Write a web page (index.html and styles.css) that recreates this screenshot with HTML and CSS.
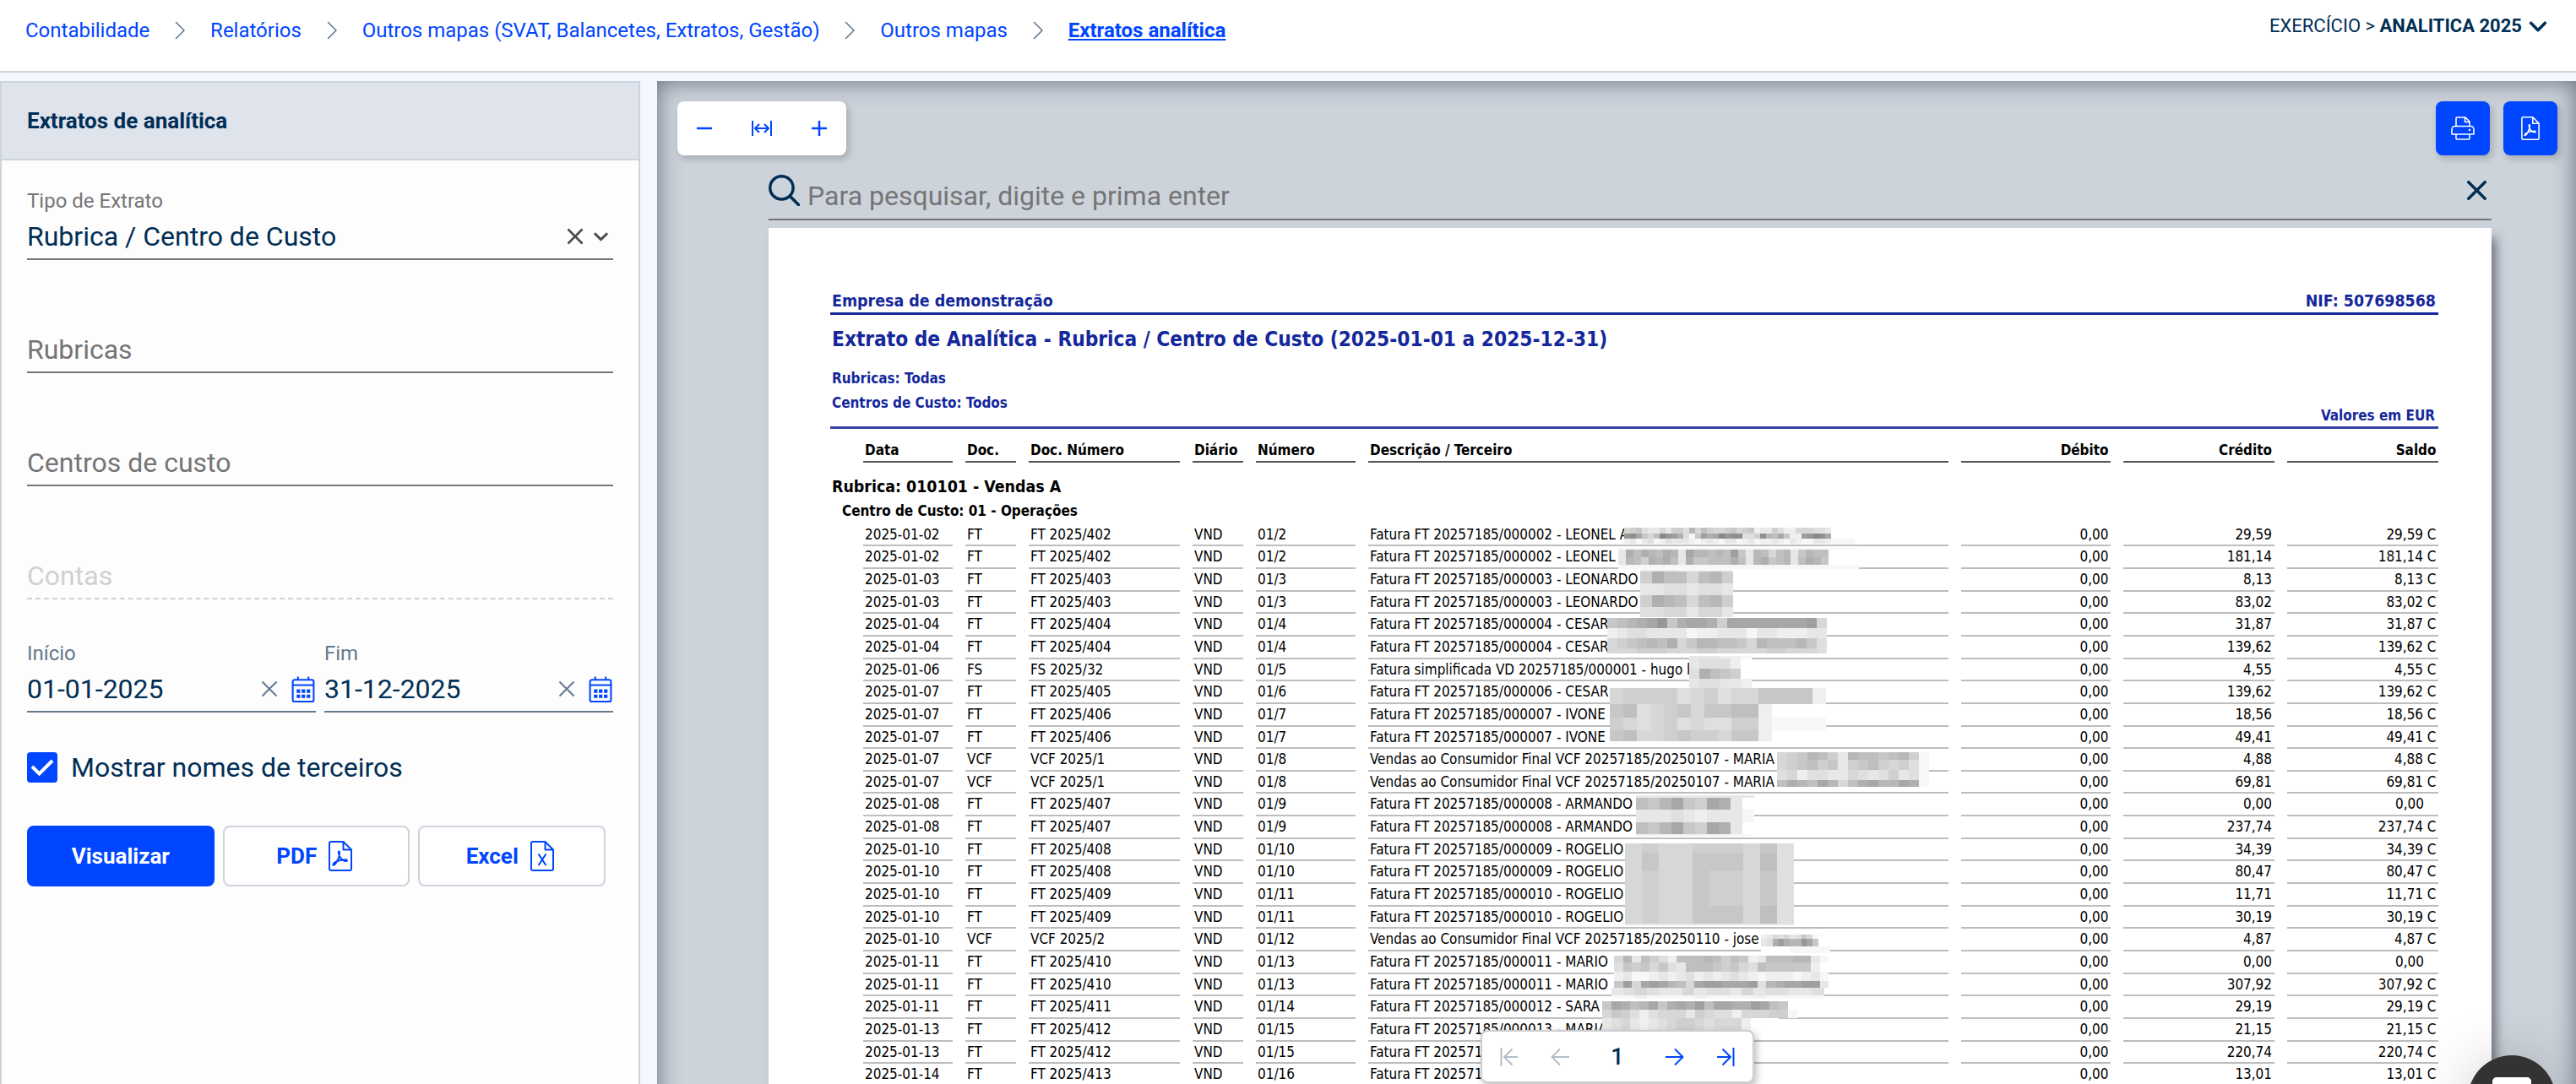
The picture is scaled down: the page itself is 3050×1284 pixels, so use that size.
FILE: index.html
```html
<!DOCTYPE html>
<html lang="pt">

<head>
    <meta charset="UTF-8">
    <meta name="viewport" content="width=device-width, initial-scale=1.0">
    <title>Extratos analítica</title>
    <link rel="stylesheet" href="styles.css">
</head>

<body>
    <svg class="sprite">
        <symbol id="sep" viewBox="0 0 12 22"><path d="M1 1l10 10L1 21" /></symbol>
        <symbol id="cross" viewBox="0 0 20 20"><path d="M1.500 1.500l17 17M18.500 1.500l-17 17" /></symbol>
        <symbol id="down" viewBox="0 0 20 12"><path d="M2 2l8 8 8-8" /></symbol>
        <symbol id="calendar" viewBox="0 0 26 30">
            <path d="M7 .5v4M19 .5v4M3 4.200h20a2 2 0 0 1 2 2V27a2 2 0 0 1-2 2H3a2 2 0 0 1-2-2V6.200a2 2 0 0 1 2-2zM1 10.200h24" />
            <path class="fill" d="M5.500 15h4v4h-4zM11.200 15h4v4h-4zM17 15h4v4h-4zM5.500 21h4v4h-4zM11.200 21h4v4h-4zM17 21h4v4h-4z" />
        </symbol>
        <symbol id="pdf" viewBox="0 0 28 36">
            <path d="M3 1h14.500L27 10.500V33a2 2 0 0 1-2 2H3a2 2 0 0 1-2-2V3a2 2 0 0 1 2-2zM17.500 1v9.500H27" />
            <path d="M12.500 12.500c-1.500 0-.5 3.500 1 6.500 1.500 2.500 4 5 7 5 2 0 2-1.700 0-1.800-4-.2-9 1-12.500 3-2.500 1.500-3.500 3.800-2 3.600 1.600-.3 4-4 6-9 1-3 1.500-7.300.5-7.300z" />
        </symbol>
        <symbol id="excel" viewBox="0 0 28 36">
            <path d="M3 1h14.500L27 10.500V33a2 2 0 0 1-2 2H3a2 2 0 0 1-2-2V3a2 2 0 0 1 2-2zM17.500 1v9.500H27" />
            <path d="M9.500 15.500l9 13.500M18.500 15.500l-9 13.500" />
        </symbol>
        <symbol id="print" viewBox="0 0 28 28">
            <path d="M6 11.500V2a1 1 0 0 1 1-1h10l5 5v5.500M16.500 1v5.500H22M6 21H1v-6a3.500 3.500 0 0 1 3.500-3.500h19A3.500 3.500 0 0 1 27 15v6h-5M6 21h16M6 21v5a1 1 0 0 0 1 1h14a1 1 0 0 0 1-1v-5" />
            <circle class="fill" cx="22" cy="16" r="1.200" />
        </symbol>
    </svg>

    <div class="app">
        <header class="top">
            <nav class="breadcrumb">
                <a>Contabilidade</a>
                <svg class="sep"><use href="#sep" /></svg>
                <a>Relatórios</a>
                <svg class="sep"><use href="#sep" /></svg>
                <a>Outros mapas (SVAT, Balancetes, Extratos, Gestão)</a>
                <svg class="sep"><use href="#sep" /></svg>
                <a>Outros mapas</a>
                <svg class="sep"><use href="#sep" /></svg>
                <a class="current">Extratos analítica</a>
            </nav>
            <div class="exercise">
                <span>EXERCÍCIO &gt; <b>ANALITICA 2025</b></span>
                <svg class="exercise-arrow"><use href="#down" /></svg>
            </div>
        </header>

        <main class="content">
            <section class="panel">
                <h1 class="panel-title">Extratos de analítica</h1>
                <form class="form">
                    <div class="field first">
                        <label class="label">Tipo de Extrato</label>
                        <div class="value">Rubrica / Centro de Custo
                            <span class="actions tight">
                                <svg class="clear"><use href="#cross" /></svg>
                                <svg class="arrow"><use href="#down" /></svg>
                            </span>
                        </div>
                    </div>
                    <div class="field"><div class="value placeholder">Rubricas</div></div>
                    <div class="field"><div class="value placeholder">Centros de custo</div></div>
                    <div class="field disabled"><div class="value">Contas</div></div>
                    <div class="dates">
                        <div class="field date">
                            <label class="label">Início</label>
                            <div class="value">01-01-2025
                                <span class="actions">
                                    <svg class="clear"><use href="#cross" /></svg>
                                    <svg class="calendar"><use href="#calendar" /></svg>
                                </span>
                            </div>
                        </div>
                        <div class="field date">
                            <label class="label">Fim</label>
                            <div class="value">31-12-2025
                                <span class="actions">
                                    <svg class="clear"><use href="#cross" /></svg>
                                    <svg class="calendar"><use href="#calendar" /></svg>
                                </span>
                            </div>
                        </div>
                    </div>
                    <div class="check">
                        <span class="box"><svg class="tick" viewBox="0 0 28 22"><path d="M2 10l8.500 8.500L26 3" /></svg></span>
                        Mostrar nomes de terceiros
                    </div>
                    <div class="buttons">
                        <a class="btn primary">Visualizar</a>
                        <a class="btn with-icon">PDF <svg class="file"><use href="#pdf" /></svg></a>
                        <a class="btn with-icon">Excel <svg class="file"><use href="#excel" /></svg></a>
                    </div>
                </form>
            </section>

            <section class="viewer">
                <div class="toolbar">
                    <div class="zoom">
                        <svg class="zoom-icon" viewBox="0 0 24 24"><path class="thick" d="M3 12h18" /></svg>
                        <svg class="zoom-icon" viewBox="0 0 24 24"><path d="M1 3v18M23 3v18M4.500 12h15M9 7l-5 5 5 5M15 7l5 5-5 5" /></svg>
                        <svg class="zoom-icon" viewBox="0 0 24 24"><path class="thick" d="M3 12h18M12 3v18" /></svg>
                    </div>
                    <div class="tools">
                        <a class="tool"><svg class="print"><use href="#print" /></svg></a>
                        <a class="tool"><svg class="pdf"><use href="#pdf" /></svg></a>
                    </div>
                </div>
                <div class="search">
                    <svg class="search-icon" viewBox="0 0 36 36"><circle cx="15" cy="15" r="13.300" /><path d="M24.500 24.500l10 10" /></svg>
                    <span class="search-text">Para pesquisar, digite e prima enter</span>
                    <svg class="search-close"><use href="#cross" /></svg>
                </div>

                <article class="paper">
                    <div class="company"><span>Empresa de demonstração</span><span>NIF: 507698568</span></div>
                    <h2 class="title">Extrato de Analítica - Rubrica / Centro de Custo (2025-01-01 a 2025-12-31)</h2>
                    <p class="filter">Rubricas: Todas</p>
                    <div class="filters"><span>Centros de Custo: Todos</span><span class="currency">Valores em EUR</span></div>
                    <div class="row head">
                        <span>Data</span><span>Doc.</span><span>Doc. Número</span><span>Diário</span><span>Número</span><span>Descrição / Terceiro</span><span class="num">Débito</span><span class="num">Crédito</span><span class="num">Saldo</span>
                    </div>
                    <h3 class="rubric">Rubrica: 010101 - Vendas A</h3>
                    <h4 class="center">Centro de Custo: 01 - Operações</h4>
                    <div id="rows"></div>
                </article>
                <div id="masks"></div>
            </section>
        </main>

        <div class="pager">
            <svg class="page-icon off" viewBox="0 0 22 22"><path d="M1.500 0v22M21 11H5M14.500 1.500L5 11l9.500 9.500" /></svg>
            <svg class="page-icon off" viewBox="0 0 22 22"><path d="M22 11H1.500M11 1.500L1.500 11l9.500 9.500" /></svg>
            <span class="page">1</span>
            <svg class="page-icon" viewBox="0 0 22 22"><path d="M0 11h20.500M11 1.500l9.500 9.500-9.500 9.500" /></svg>
            <svg class="page-icon" viewBox="0 0 22 22"><path d="M20.500 0v22M1 11h16M7.500 1.500L17 11l-9.500 9.500" /></svg>
        </div>

        <div class="chat"><svg class="bubble" viewBox="0 0 46 44"><path d="M5 0h36a5 5 0 0 1 5 5v39L34 34H5a5 5 0 0 1-5-5V5a5 5 0 0 1 5-5z" /></svg></div>
    </div>

    <script src="script.js"></script>
</body>

</html>
```
FILE: styles.css
```css
* {
    box-sizing: border-box;
}

body {
    margin: 0;
    background: #f3f7ff;
    color: #002e55;
    font-family: Roboto, sans-serif;
}

.app {
    position: relative;
    height: 1284px;
    overflow: hidden;
}

svg {
    flex: none;
    fill: none;
    stroke: currentColor;
    stroke-width: 2;
    stroke-linejoin: round;
}

.sprite {
    display: none;
}

.fill {
    fill: currentColor;
    stroke: none;
}

/* top bar */
.top {
    display: flex;
    justify-content: space-between;
    height: 86px;
    padding: 0 33px 0 30px;
    background: #fff;
    border-bottom: 2px solid #cdd3dc;
}

.breadcrumb {
    display: flex;
    align-items: center;
    gap: 29.900px;
    height: 72px;
    font-size: 24px;
    line-height: 28px;
    color: #0045ff;
}

.sep {
    width: 12px;
    height: 22px;
    color: #64788f;
    stroke-width: 1.6;
}

.current {
    font-weight: bold;
    text-decoration: underline;
}

.exercise {
    display: flex;
    align-items: center;
    gap: 7px;
    height: 61px;
    font-size: 22px;
}

.exercise-arrow {
    width: 24px;
    height: 14px;
    stroke-width: 3;
}

.content {
    display: flex;
    gap: 20px;
    height: 1260px;
    padding-top: 10px;
}

/* filters panel */
.panel {
    width: 758px;
    background: #fdfdfd;
    border: 2px solid #cdd3dc;
    border-bottom: 0;
}

.panel-title {
    margin: 0;
    padding-left: 30px;
    height: 92px;
    border-bottom: 2px solid #cdd3dc;
    background: #dfe3ec;
    font-size: 26px;
    line-height: 90px;
}

.form {
    padding: 0 30px;
}

.field {
    display: flex;
    flex-direction: column;
    justify-content: flex-end;
    height: 134px;
    border-bottom: 2px solid #757575;
}

.field.first {
    height: 118px;
}

.label {
    margin-bottom: 9px;
    font-size: 24px;
    line-height: 28px;
    color: #757575;
}

.value {
    display: flex;
    justify-content: space-between;
    align-items: center;
    padding-bottom: 7px;
    font-size: 32px;
    line-height: 38px;
}

.placeholder {
    color: #757575;
}

.disabled {
    border-bottom: 2px dashed #d0d0d0;
    color: #d0d0d0;
}

.actions {
    display: flex;
    align-items: center;
    gap: 16px;
    margin-right: 1px;
    color: #64788f;
}

.actions.tight {
    gap: 11px;
    margin-right: 5px;
    color: #4c4c4c;
}

.clear {
    width: 20px;
    height: 20px;
}

.tight .clear {
    stroke-width: 2.6;
}

.arrow {
    width: 19px;
    height: 12px;
    stroke-width: 3.2;
}

.calendar {
    width: 28px;
    height: 31px;
    color: #0045ff;
}

.dates {
    display: flex;
    gap: 10px;
}

.date {
    flex: 1;
    border-color: #64788f;
}

.date .label {
    color: #64788f;
}

.check {
    display: flex;
    align-items: center;
    gap: 16px;
    margin: 46px 0 50px;
    font-size: 32px;
    line-height: 38px;
}

.box {
    display: flex;
    align-items: center;
    justify-content: center;
    width: 36px;
    height: 36px;
    border-radius: 4px;
    background: #0045ff;
    color: #fff;
}

.tick {
    width: 28px;
    height: 22px;
    stroke-width: 4;
    stroke-linejoin: miter;
}

.buttons {
    display: flex;
    gap: 10px;
}

.btn {
    display: flex;
    align-items: center;
    justify-content: center;
    gap: 14px;
    width: 221.500px;
    height: 72px;
    border: 2px solid #cdd3dc;
    border-radius: 8px;
    background: #fff;
    color: #0045ff;
    font-size: 26px;
    font-weight: bold;
}

.btn.with-icon {
    padding-right: 4px;
}

.btn.primary {
    border-color: #0045ff;
    background: #0045ff;
    color: #fff;
}

.file {
    width: 28px;
    height: 36px;
}

/* report viewer */
.viewer {
    position: relative;
    flex: 1;
    padding-top: 24px;
    background: #cdd3db;
    box-shadow: inset 0 0 28px rgba(50, 55, 70, 0.65);
}

.toolbar {
    display: flex;
    justify-content: space-between;
    height: 64px;
    padding: 0 22px 0 24px;
}

.zoom {
    display: flex;
    align-items: center;
    justify-content: space-between;
    width: 200px;
    padding: 0 20px;
    border-radius: 8px;
    background: #fff;
    color: #0045ff;
    box-shadow: 3px 4px 8px rgba(0, 0, 0, 0.2);
}

.zoom-icon {
    width: 24px;
    height: 24px;
}

.thick {
    stroke-width: 2.5;
}

.tools {
    display: flex;
    gap: 16px;
}

.tool {
    display: flex;
    align-items: center;
    justify-content: center;
    width: 64px;
    border-radius: 8px;
    background: #0045ff;
    color: #fff;
    box-shadow: 3px 4px 8px rgba(0, 0, 0, 0.2);
}

.print {
    width: 28px;
    height: 28px;
    stroke-width: 1.6;
}

.pdf {
    width: 22px;
    height: 28px;
}

.search {
    display: flex;
    align-items: flex-start;
    height: 57px;
    margin: 20px 100px 9px 132px;
    border-bottom: 2px solid #757575;
    color: #002e55;
}

.search-icon {
    width: 37px;
    height: 37px;
    margin-top: 3px;
    stroke-width: 3.4;
    stroke-linecap: round;
}

.search-text {
    flex: 1;
    padding: 9px 0 0 9px;
    font-size: 32px;
    line-height: 38px;
    color: #757575;
}

.search-close {
    width: 23px;
    height: 23px;
    margin: 10px 6px 0 0;
    stroke-width: 3;
    stroke-linecap: round;
}

/* report page */
.paper {
    height: 1070px;
    margin: 0 100px 0 132px;
    padding: 75px 63px 0 73px;
    background: #fff;
    box-shadow: 7px 10px 12px -2px rgba(40, 45, 60, 0.6);
    color: #000;
    font-family: "DejaVu Sans Condensed", "DejaVu Sans", sans-serif;
    font-size: 16.950px;
}

.company {
    display: flex;
    justify-content: space-between;
    height: 28px;
    padding: 0 3px 0 2px;
    border-bottom: 3px solid #14279b;
    color: #14279b;
    font-size: 19.400px;
    font-weight: bold;
    line-height: 24px;
}

.title {
    margin: 14px 0 21px 2px;
    color: #14279b;
    font-size: 24.230px;
    line-height: 30px;
}

.filter {
    margin: 0 0 9px 2px;
    color: #14279b;
    font-weight: bold;
    line-height: 20px;
}

.filters {
    display: flex;
    justify-content: space-between;
    height: 41px;
    padding: 0 4px 0 2px;
    border-bottom: 3px solid #3443a8;
    color: #14279b;
    font-weight: bold;
    line-height: 20px;
}

.currency {
    padding-top: 15px;
}

.row {
    display: grid;
    grid-template-columns: 106px 60px 179px 60px 118px 687.500px 177px 178.500px 179.500px;
    column-gap: 15px;
    height: 26.667px;
    margin-left: 38.500px;
    line-height: 24.667px;
    white-space: pre;
}

.row span {
    padding-left: 2.500px;
    border-bottom: 2px solid #bdbdbd;
}

.row .num {
    padding-right: 2.500px;
    text-align: right;
}

.head {
    height: 25px;
    margin-top: 15px;
    font-weight: bold;
    line-height: 20px;
}

.head span {
    border-color: #555;
}

.rubric {
    margin: 17px 0 6px 2px;
    font-size: 19.400px;
    line-height: 24px;
}

.center {
    margin: 0 0 5.600px 14px;
    font-size: 16.950px;
    line-height: 20px;
}

/* pixelated blocks over the third party names */
.mask {
    position: absolute;
}

.mask-row {
    display: flex;
}

.pager {
    position: absolute;
    left: 1753px;
    top: 1220px;
    display: flex;
    align-items: center;
    justify-content: space-between;
    width: 324px;
    height: 63px;
    padding: 0 21px;
    border: 2px solid #cdcdd2;
    border-radius: 8px;
    background: #fff;
    color: #0045ff;
    box-shadow: 3px 4px 10px rgba(0, 0, 0, 0.25);
}

.page-icon {
    width: 22px;
    height: 22px;
}

.page-icon.off {
    color: #b3bcc9;
}

.page {
    width: 38px;
    color: #002e55;
    font-size: 27px;
    font-weight: 500;
    text-align: center;
}

.chat {
    position: absolute;
    left: 2922px;
    top: 1250px;
    display: flex;
    justify-content: center;
    width: 104px;
    height: 104px;
    padding-top: 26px;
    border-radius: 50%;
    background: #333;
    box-shadow: 0 4px 70px rgba(0, 0, 0, 0.2);
}

.bubble {
    width: 46px;
    height: 44px;
    fill: #fff;
    stroke: none;
}
```
FILE: script.js
```js
// data, doc, número doc, número, descrição, crédito, saldo
var rows = [
    ['2025-01-02', 'FT', 'FT 2025/402', '01/2', 'Fatura FT 20257185/000002 - LEONEL A', '29,59', '29,59 C'],
    ['2025-01-02', 'FT', 'FT 2025/402', '01/2', 'Fatura FT 20257185/000002 - LEONEL', '181,14', '181,14 C'],
    ['2025-01-03', 'FT', 'FT 2025/403', '01/3', 'Fatura FT 20257185/000003 - LEONARDO', '8,13', '8,13 C'],
    ['2025-01-03', 'FT', 'FT 2025/403', '01/3', 'Fatura FT 20257185/000003 - LEONARDO', '83,02', '83,02 C'],
    ['2025-01-04', 'FT', 'FT 2025/404', '01/4', 'Fatura FT 20257185/000004 - CESAR', '31,87', '31,87 C'],
    ['2025-01-04', 'FT', 'FT 2025/404', '01/4', 'Fatura FT 20257185/000004 - CESAR', '139,62', '139,62 C'],
    ['2025-01-06', 'FS', 'FS 2025/32', '01/5', 'Fatura simplificada VD 20257185/000001 - hugo l', '4,55', '4,55 C'],
    ['2025-01-07', 'FT', 'FT 2025/405', '01/6', 'Fatura FT 20257185/000006 - CESAR', '139,62', '139,62 C'],
    ['2025-01-07', 'FT', 'FT 2025/406', '01/7', 'Fatura FT 20257185/000007 - IVONE', '18,56', '18,56 C'],
    ['2025-01-07', 'FT', 'FT 2025/406', '01/7', 'Fatura FT 20257185/000007 - IVONE', '49,41', '49,41 C'],
    ['2025-01-07', 'VCF', 'VCF 2025/1', '01/8', 'Vendas ao Consumidor Final VCF 20257185/20250107 - MARIA', '4,88', '4,88 C'],
    ['2025-01-07', 'VCF', 'VCF 2025/1', '01/8', 'Vendas ao Consumidor Final VCF 20257185/20250107 - MARIA', '69,81', '69,81 C'],
    ['2025-01-08', 'FT', 'FT 2025/407', '01/9', 'Fatura FT 20257185/000008 - ARMANDO', '0,00', '0,00   '],
    ['2025-01-08', 'FT', 'FT 2025/407', '01/9', 'Fatura FT 20257185/000008 - ARMANDO', '237,74', '237,74 C'],
    ['2025-01-10', 'FT', 'FT 2025/408', '01/10', 'Fatura FT 20257185/000009 - ROGELIO', '34,39', '34,39 C'],
    ['2025-01-10', 'FT', 'FT 2025/408', '01/10', 'Fatura FT 20257185/000009 - ROGELIO', '80,47', '80,47 C'],
    ['2025-01-10', 'FT', 'FT 2025/409', '01/11', 'Fatura FT 20257185/000010 - ROGELIO', '11,71', '11,71 C'],
    ['2025-01-10', 'FT', 'FT 2025/409', '01/11', 'Fatura FT 20257185/000010 - ROGELIO', '30,19', '30,19 C'],
    ['2025-01-10', 'VCF', 'VCF 2025/2', '01/12', 'Vendas ao Consumidor Final VCF 20257185/20250110 - jose', '4,87', '4,87 C'],
    ['2025-01-11', 'FT', 'FT 2025/410', '01/13', 'Fatura FT 20257185/000011 - MARIO', '0,00', '0,00   '],
    ['2025-01-11', 'FT', 'FT 2025/410', '01/13', 'Fatura FT 20257185/000011 - MARIO', '307,92', '307,92 C'],
    ['2025-01-11', 'FT', 'FT 2025/411', '01/14', 'Fatura FT 20257185/000012 - SARA', '29,19', '29,19 C'],
    ['2025-01-13', 'FT', 'FT 2025/412', '01/15', 'Fatura FT 20257185/000013 - MARIA', '21,15', '21,15 C'],
    ['2025-01-13', 'FT', 'FT 2025/412', '01/15', 'Fatura FT 20257185/000013 - MARIA', '220,74', '220,74 C'],
    ['2025-01-14', 'FT', 'FT 2025/413', '01/16', 'Fatura FT 20257185/000014', '13,01', '13,01 C']
]

document.getElementById('rows').innerHTML = rows.map(function (r) {
    return '<div class="row"><span>' + [r[0], r[1], r[2], 'VND', r[3], r[4]].join('</span><span>') +
        '</span><span class="num">' + ['0,00', r[5], r[6]].join('</span><span class="num">') + '</span></div>'
}).join('')

// x, y, cell width, then [height, cells]; each cell is a hex digit, 0 = white, f = darkest
var masks = [
    [1145, 529, 7, [6.5, '567433536649586556756723364225554430000'], [6.5, 'deb758fdca417cabfdee446e98b722cdfeb0000'], [5.5, '231341243332123213312312232132113321111']],
    [1138, 553, 8.9, [2, '11111111111111111111111111111111'], [9, '3a8a98a93b99898c739858937988'], [9, '3986a9a83a77888a839a78938a97'], [5, '11111111111111111111111111111111']],
    [1164, 579, 13.8, [2, '33322222'], [14.3, '6a885896'], [14, '33443443'], [14, '6a985896'], [11.7, '44553553']],
    [1125, 636, 11.8, [12, '789abd7abba6bbbbbbbbc5'], [12, '2344333312233313322233'], [12, '567898a579988759888974'], [6, '5556665556655555665554']],
    [1222, 681, 12.3, [3, '333221'], [12, '344420'], [12, '4a8760'], [11, '344332']],
    [1128, 719, 16, [19, '5666645645577772'], [16, '7845675778820000'], [15, '6545645446621111'], [13, '785567665772']],
    [1326, 795, 12, [9, '567986398878961'], [12, '567867367865641'], [12, '452443354346341'], [8, '8a98b958ab99ba1']],
    [1159, 846, 14, [3, '3333333333'], [14.3, '879b76ba30'], [14.3, '3334323331'], [14.3, '879b76ba30'], [2, '2222222211']],
    [1146, 903, 20, [11, '5655666574'], [21, '5755777584'], [42, '5655766574'], [21, '5655777584'], [2, '3333333333']],
    [1307, 1011, 6.8, [5, '235453475100'], [9, '34aca99db700'], [8, '000001111111']],
    [1133, 1036, 10.6, [8, '593864288898687238889931'], [11, '476757438887675487777720'], [11, '231123234232343212221231'], [8, '7c5bcb985bccbbbc49abbcc3']],
    [1130, 1074, 14, [9, '345433534435344334'], [4, '112111121111211111']],
    [1119, 1090, 11, [10, '7ba89b7abac8bbaacb87'], [10, '576424555365442555661'], [17, '3453234566545552000']]
]

document.getElementById('masks').innerHTML = masks.map(function (m) {
    var lines = m.slice(3).map(function (l) {
        return '<div class="mask-row">' + l[1].split('').map(function (c) {
            var g = 255 - 8 * parseInt(c, 16)
            return '<i style="width:' + m[2] + 'px;height:' + l[0] + 'px;background:rgb(' + [g, g, g] + ')"></i>'
        }).join('') + '</div>'
    }).join('')
    return '<div class="mask" style="left:' + m[0] + 'px;top:' + m[1] + 'px">' + lines + '</div>'
}).join('')
```
